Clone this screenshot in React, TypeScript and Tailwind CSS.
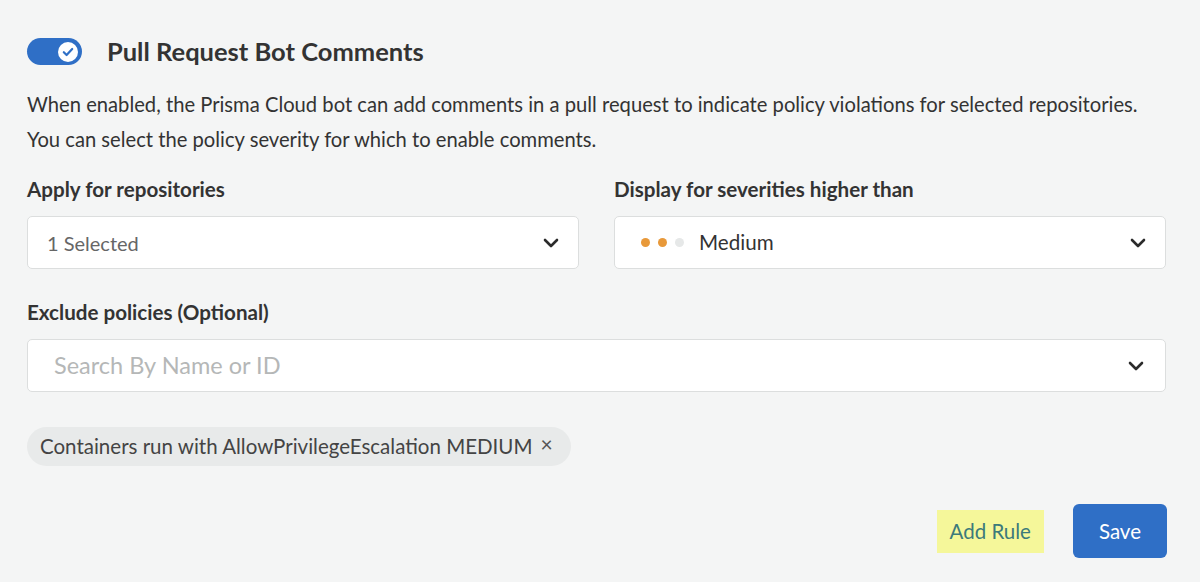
import React from "react";

function Chevron() {
  return (
    <svg width="16" height="10" viewBox="0 0 16 10" fill="none" className="shrink-0">
      <path d="M2 2l6 6 6-6" stroke="#2b2b2b" strokeWidth="2.6" strokeLinecap="round" strokeLinejoin="round" />
    </svg>
  );
}

function Toggle() {
  return (
    <div className="relative h-[27px] w-[55px] shrink-0 rounded-full bg-[#2f6fc6]">
      <div className="absolute right-[4px] top-[3.5px] flex h-[20px] w-[20px] items-center justify-center rounded-full bg-white">
        <svg width="12" height="10" viewBox="0 0 12 10" fill="none">
          <path d="M1.8 5.2l2.8 2.8 5.6-6" stroke="#2f6fc6" strokeWidth="2.2" strokeLinecap="round" strokeLinejoin="round" />
        </svg>
      </div>
    </div>
  );
}

function SelectBox({ children }: { children: React.ReactNode }) {
  return (
    <div className="flex h-[53px] items-center justify-between rounded-[5px] border border-[#dcdede] bg-white pl-[19px] pr-[19px]">
      <div className="flex items-center">{children}</div>
      <Chevron />
    </div>
  );
}

export default function App() {
  return (
    <div
      className="min-h-[582px] w-[1200px] bg-[#f4f5f5] pl-[27px] pr-[34px] pt-[38px] text-[#333]"
      style={{ fontFamily: "Lato, 'Noto Sans', sans-serif" }}
    >
      <div className="flex items-center gap-[25px]">
        <Toggle />
        <h1 className="text-[25.5px] font-bold leading-[27px] text-[#333]">Pull Request Bot Comments</h1>
      </div>

      <p className="mt-[22px] text-[20.2px] leading-[35px] text-[#333]">
        When enabled, the Prisma Cloud bot can add comments in a pull request to indicate policy violations for selected repositories.
        <br />
        You can select the policy severity for which to enable comments.
      </p>

      <div className="mt-[20px] grid grid-cols-2 gap-[35px]">
        <div>
          <div className="text-[20.6px] font-bold leading-[24px]">Apply for repositories</div>
          <div className="mt-[15px]">
            <SelectBox>
              <span className="text-[20px] text-[#666]">1 Selected</span>
            </SelectBox>
          </div>
        </div>
        <div>
          <div className="text-[20.6px] font-bold leading-[24px]">Display for severities higher than</div>
          <div className="mt-[15px]">
            <SelectBox>
              <div className="ml-[7px] flex items-center gap-[8px]">
                <span className="h-[9px] w-[9px] rounded-full bg-[#e8993a]" />
                <span className="h-[9px] w-[9px] rounded-full bg-[#e8993a]" />
                <span className="h-[9px] w-[9px] rounded-full bg-[#e6e8e8]" />
              </div>
              <span className="ml-[15px] text-[20.6px] text-[#333]">Medium</span>
            </SelectBox>
          </div>
        </div>
      </div>

      <div className="mt-[31px] text-[20.6px] font-bold leading-[24px]">Exclude policies (Optional)</div>
      <div className="mt-[15px] flex h-[53px] items-center justify-between rounded-[5px] border border-[#dcdede] bg-white pl-[26px] pr-[21px]">
        <span className="text-[23.5px] text-[#b5b7b7]">Search By Name or ID</span>
        <Chevron />
      </div>

      <div className="mt-[35px] inline-flex h-[39px] items-center gap-[8px] rounded-full bg-[#e8eaea] pl-[13px] pr-[18px]">
        <span className="text-[20.5px] text-[#444]">Containers run with AllowPrivilegeEscalation MEDIUM</span>
        <span className="-mt-[6px] text-[21px] leading-none text-[#555]">×</span>
      </div>

      <div className="mt-[38px] flex items-center justify-end gap-[29px]">
        <button className="flex h-[43px] items-center bg-[#f5f79a] px-[13px] text-[20.5px] text-[#3c7a7b]">Add Rule</button>
        <button className="-mr-[1px] flex h-[54px] items-center rounded-[6px] bg-[#2f6fc6] px-[26px] text-[20.5px] text-white">Save</button>
      </div>
    </div>
  );
}
